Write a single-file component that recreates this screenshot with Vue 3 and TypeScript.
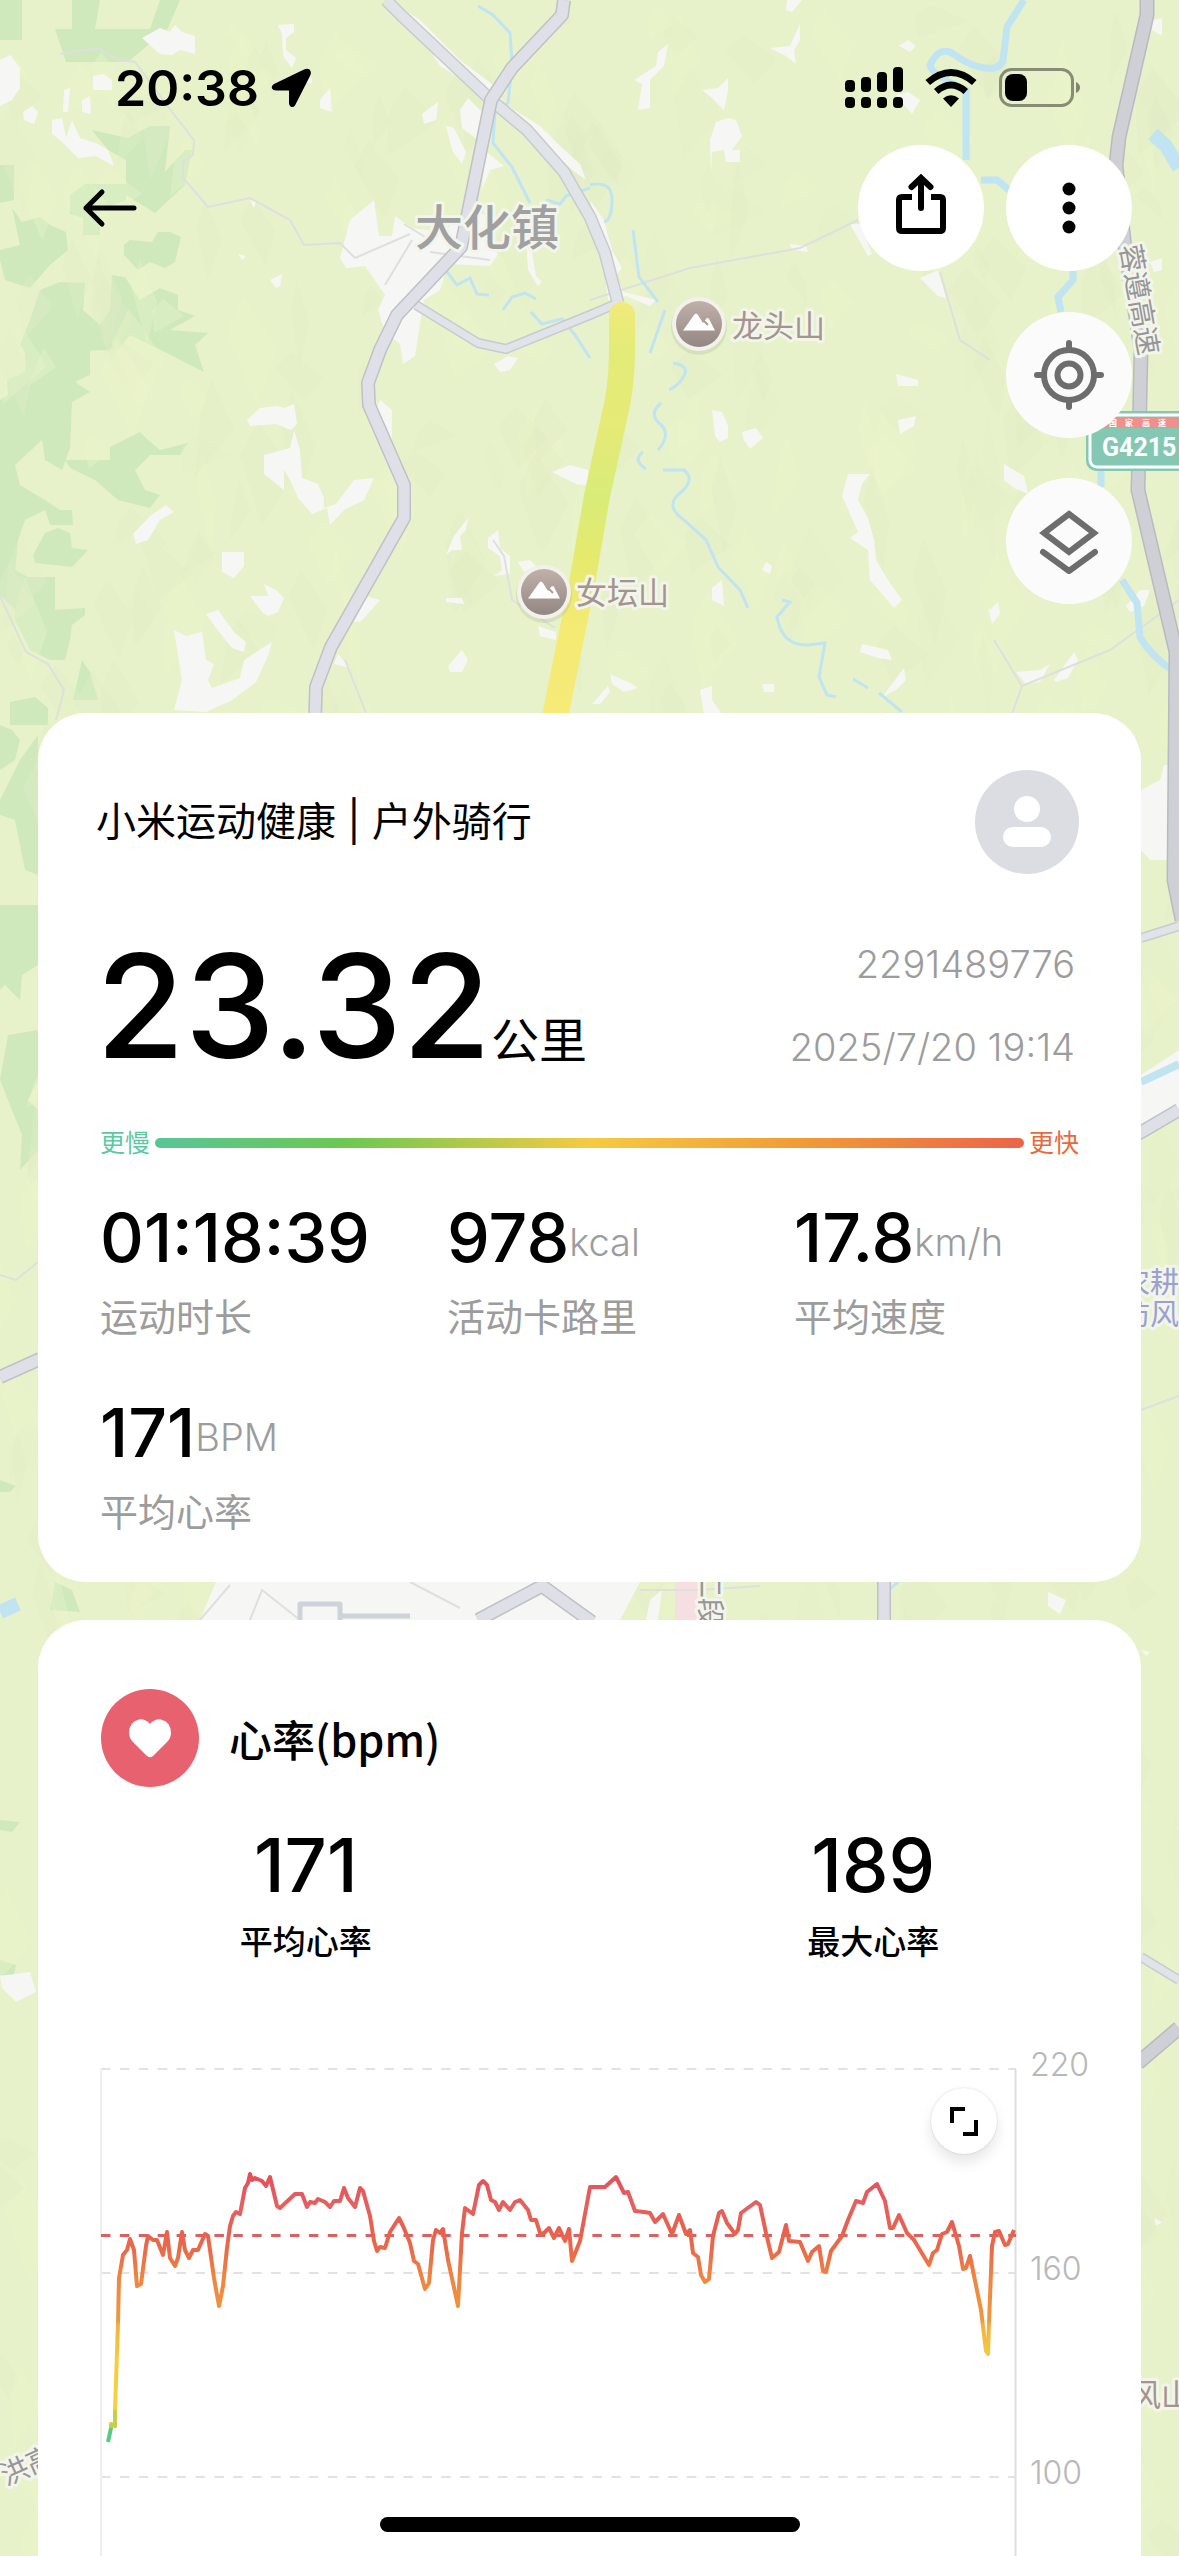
<script setup lang="ts">
interface Stat {
  value: string
  unit?: string
  label: string
}

const stats: Stat[] = [
  { value: '01:18:39', label: '运动时长' },
  { value: '978', unit: 'kcal', label: '活动卡路里' },
  { value: '17.8', unit: 'km/h', label: '平均速度' },
  { value: '171', unit: 'BPM', label: '平均心率' },
]

const heartStats: Stat[] = [
  { value: '171', label: '平均心率' },
  { value: '189', label: '最大心率' },
]

const axis = [220, 160, 100, 40]

// Heart rate samples: x runs along the workout, y is measured down from 220 bpm.
const heartLine =
  '7,373 10,359 10,355 14,357 14,341 17,254 18,209 22,186 26,181 29,170 33,181 36,217 40,215 45,177 47,167 52,171 56,171 62,186 66,163 69,189 74,197 77,189 81,163 84,181 88,189 92,181 97,181 104,165 107,167 113,209 118,237 122,217 126,179 129,157 132,147 135,143 139,145 144,119 147,114 149,105 151,111 154,109 161,112 165,117 169,108 176,137 179,139 194,125 201,125 206,138 209,133 214,134 217,130 224,133 229,138 233,132 239,132 243,119 247,129 254,138 259,119 262,122 269,147 273,172 276,182 279,178 284,179 289,163 298,149 302,157 309,174 313,192 317,195 324,220 328,214 332,171 335,161 339,164 342,160 347,191 357,237 361,164 364,139 372,145 378,116 382,112 386,116 390,131 394,133 398,141 402,133 409,141 414,133 419,131 427,141 430,151 435,151 439,164 442,165 448,159 453,169 458,159 464,172 468,160 471,192 479,172 489,118 504,118 515,108 523,124 527,123 534,142 543,143 549,144 554,153 562,145 571,165 578,146 585,165 589,161 592,184 597,188 600,206 604,213 608,210 612,167 618,144 621,142 626,154 634,165 637,161 640,144 655,133 659,136 665,164 671,189 678,183 685,156 688,172 699,173 707,192 711,183 718,177 722,202 725,203 730,182 741,167 747,151 755,132 762,134 766,123 776,115 784,132 789,159 792,159 798,146 806,164 813,171 828,196 832,184 836,181 841,165 846,163 851,153 858,177 862,200 865,199 869,187 880,241 885,282 887,285 888,254 891,177 894,163 898,162 904,176 907,175 913,161'

// Faceted hill shading, seeded so that the terrain is the same on every visit.
let seed = 7
const rand = (): number => {
  seed = (seed * 16807) % 2147483647
  return seed / 2147483647
}
const tints = ['#edf7cb', '#e1ecc4', '#e0eac3', '#ecf7cb', '#e3ebc6']
const facets = Array.from({ length: 900 }, () => {
  const x = Math.round(rand() * 1200)
  const y = Math.round(rand() * 2556)
  const w = 10 + Math.round(rand() * 26)
  const h = 30 + Math.round(rand() * 80)
  const lean = Math.round(rand() * 40 - 20)
  return {
    points: `${x},${y} ${x + w},${y + h / 2} ${x + lean},${y + h} ${x - w / 2},${y + h / 3}`,
    fill: tints[Math.floor(rand() * tints.length)],
  }
})

const forests = [
  '0,0 22,0 22,40 0,40',
  '72,0 100,0 95,29 72,29',
  '55,29 150,29 160,0 180,0 168,28 128,62 66,62',
  '92,130 128,138 150,126 170,126 165,172 185,150 192,150 185,185 155,213 126,195 126,160 108,150',
  '70,195 85,184 126,184 126,200 100,210 100,235 83,235 83,218 70,214',
  '0,165 14,165 14,200 0,203',
  '12,208 22,222 40,217 50,225 66,232 68,250 50,265 30,288 5,280 0,260 0,250 20,245',
  '124,245 130,240 152,242 158,232 170,232 181,237 175,262 165,268 150,262 138,270 124,255',
  '20,345 30,320 40,290 60,282 85,283 83,310 100,325 110,310 112,275 125,277 140,300 160,288 178,295 178,310 195,316 170,330 208,333 195,345 204,372 190,365 165,352 130,335 118,350 25,352',
  '25,350 90,350 90,375 75,382 90,392 72,402 70,448 62,470 45,460 42,440 15,465 20,485 45,500 60,510 72,510 73,525 50,525 45,510 25,520 18,540 15,570 28,577 55,577 55,610 15,610 0,595 0,400 8,395 7,380 25,372',
  '65,460 110,460 110,447 140,432 148,440 160,450 188,443 180,455 150,455 135,470 145,490 160,495 150,508 118,500 95,480 70,468',
  '33,555 45,533 58,528 70,533 72,548 88,550 72,567 35,563',
  '15,605 50,610 85,608 85,615 72,625 70,640 65,660 50,660 30,650 15,620',
  '73,700 82,660 90,672 98,700',
  '10,702 35,697 48,708 48,725 10,725',
  '0,725 12,730 20,740 15,760 0,770',
  '20,760 38,735 38,875 25,870 15,820 0,815 0,800',
  '0,905 38,905 38,965 22,975 20,1000 5,985 0,990',
  '8,1035 38,1030 38,1080 28,1100 38,1110 38,1150 20,1170 22,1135 0,1080',
  '55,1582 72,1590 80,1612 50,1610',
  '0,1480 16,1486 10,1492 0,1492',
  '0,1820 20,1822 12,1832 0,1830',
  '0,1960 16,1965 14,1975 0,1975',
]

const clearings = [
  '142,38 160,28 170,32 175,25 182,32 195,36 195,54 180,50 172,55 160,54',
  '278,25 294,24 294,32 286,38 286,50 296,58 292,68 283,56 282,34',
  '0,60 10,55 20,68 20,88 12,100 0,106',
  '93,76 104,74 112,80 112,90 93,90',
  '23,112 32,106 38,112 34,124 24,120',
  '64,90 70,88 68,112 63,112',
  '82,100 90,96 91,114 82,112',
  '52,120 62,118 66,138 72,120 80,138 98,144 108,150 114,166 96,156 78,158 62,142 52,134',
  '305,78 309,76 313,80 310,84',
  '320,100 330,88 332,112 320,108',
  '340,258 350,220 374,200 379,236 392,236 395,216 412,228 440,232 470,215 490,214 490,246 498,254 490,266 448,264 440,290 424,300 420,324 415,356 403,364 400,344 385,332 378,310 385,295 365,266 346,268',
  '405,10 420,20 440,40 460,60 492,84 505,104 540,126 560,146 580,164 586,180 575,172 550,150 500,112 470,84 440,66 430,50',
  '460,110 468,98 482,112 478,140 462,128',
  '446,126 454,128 466,152 462,164 452,150',
  '422,114 438,102 436,120 424,124',
  '484,150 504,166 490,170 482,190 484,160',
  '526,240 532,252 536,276 542,282 538,286 528,270',
  '270,280 282,274 280,286 276,288',
  '238,254 246,256 242,260',
  '250,200 256,202 254,208',
  '247,420 260,408 278,406 284,408 294,404 297,424 291,430 276,424 250,426',
  '264,455 290,448 294,430 300,450 302,478 318,484 324,498 324,508 336,504 354,480 374,478 364,500 344,510 330,525 327,508 312,514 298,498 290,480 284,470 284,490 264,474',
  '133,534 150,516 166,505 174,512 160,520 148,540 136,544',
  '222,552 244,552 244,566 234,578 222,572',
  '250,596 268,596 264,584 276,590 284,598 278,612 268,616 262,612',
  '206,614 218,610 234,632 246,642 244,652 232,648 216,628',
  '174,630 186,636 202,632 206,660 214,664 208,680 212,688 240,678 244,660 272,642 268,656 256,682 232,700 206,712 174,710 182,680',
  '380,400 392,410 392,440 376,410',
  '366,596 380,600 364,618 360,622 354,622',
  '338,654 350,668 334,664',
  '446,555 454,536 468,518 466,530 460,536 462,550 452,550',
  '488,538 498,530 500,548 510,556 510,574 494,576 502,570 500,556 488,548',
  '494,364 508,356 518,358 510,370 500,372',
  '552,472 570,465 588,470 590,486 576,484',
  '446,598 462,598 464,604 446,602',
  '448,666 462,650 468,660 462,672 450,672',
  '518,562 530,560 536,566 524,572',
  '538,626 556,632 556,640 540,636',
  '787,0 802,0 792,12 786,10',
  '658,52 668,44 664,66 650,80 650,108 638,110 642,84 634,80 656,66',
  '770,48 790,46 800,24 800,40 794,50 796,64 786,56',
  '702,90 718,88 728,78 728,90 724,110 712,98',
  '710,140 716,122 728,118 736,120 742,136 732,150 740,150 740,162 726,162 724,150 712,152 711,172',
  '899,46 908,40 916,46 910,52',
  '590,200 604,220 612,250 622,268 616,276 624,292 656,300 650,306 626,296 608,300 602,252',
  '790,244 806,246 808,252 792,250',
  '850,224 860,224 872,254 868,256',
  '920,278 938,270 946,298 938,296',
  '896,95 908,92 920,100 912,114',
  '1153,20 1162,18 1162,36 1152,30',
  '1150,262 1162,258 1162,270 1154,272',
  '896,374 918,380 918,386 898,386',
  '712,410 722,412 728,426 728,438 720,442 715,436',
  '742,432 756,428 763,438 750,449 744,440',
  '898,420 916,416 914,426 900,434',
  '848,474 870,474 862,484 858,500 868,518 874,540 876,560 888,580 902,600 894,608 870,580 868,550 850,538 858,532 842,496',
  '1004,464 1024,476 1028,494 1014,488 1004,480',
  '990,610 998,602 1000,614 992,624 988,606',
  '880,700 904,668 906,680 896,690 888,694',
  '862,644 888,650 892,660 878,658 860,652',
  '1016,672 1040,670 1050,664 1040,682 1026,684',
  '1054,680 1074,652 1078,660 1068,678 1056,682',
  '1126,606 1140,590 1150,590 1144,606 1130,612',
  '610,674 632,684 638,688 624,692 612,684',
  '592,704 608,686 610,692 600,704',
  '700,690 712,686 712,700 722,714 704,714',
  '762,684 774,684 774,692 764,692',
  '762,570 766,562 772,566 770,574',
  '712,588 722,580 724,606 712,600',
  '200,1620 216,1582 560,1582 600,1582 640,1582 620,1620',
  '650,1600 662,1590 658,1620 646,1620',
  '1048,1592 1066,1600 1060,1614 1048,1606',
  '1141,790 1160,780 1164,765 1179,765 1179,860 1150,860 1141,850',
  '1141,1075 1179,1050 1179,1110 1150,1130 1141,1140',
  '0,1976 30,1972 36,1992 16,2002 2,1988',
  '1141,1650 1150,1652 1146,1656',
  '1154,2218 1162,2222 1156,2226',
]

const streams = [
  'M478 6 493 15 510 33 512 63 508 103 495 110 493 143 512 167 530 203',
  'M546 200 560 204 566 196 590 188',
  'M447 272 457 285 470 278 477 294 489 295',
  'M503 310 512 297 525 293 536 299',
  'M531 312 542 324 562 319 575 335 590 358',
  'M590 185Q612 180 612 200T604 222',
  'M633 230 639 277 658 302M665 310 658 330 650 353',
  'M673 363Q690 366 684 376T669 390M661 403Q648 414 660 424T658 450M643 452Q632 460 646 469',
  'M663 470 684 470Q696 480 680 493T684 520L706 540 718 567 740 590 748 608',
  'M782 600 790 602 777 617Q782 646 808 645L825 643 819 677 827 695 836 697',
  'M853 679 868 688M879 693 902 712',
]

const lanes = [
  'M60 54 98 48 118 60 135 62 172 112 194 140 193 155 183 162 183 178 208 207 250 198 290 220 304 245 340 243 355 258',
  'M355 258 410 234M385 285 412 240M430 252 490 260M404 224 430 240',
  'M590 300 690 268 800 248 858 220',
  'M940 272 960 340 990 360',
  'M1179 600 1110 650 1022 686M1022 686 994 640M1022 686 1010 720',
  'M0 596 26 652 48 664 64 690 56 720',
  'M493 540 504 556 512 600 555 628M345 660 366 713',
  'M1141 1410 1179 1396M0 1275 16 1280 38 1262',
  'M200 1620 230 1585M250 1620 262 1590 300 1620M410 1582 460 1608M640 1590 700 1590 760 1586',
]
</script>

<template>
  <main class="screen">
    <svg class="map" viewBox="0 0 1179 2556" preserveAspectRatio="xMidYMin slice" aria-hidden="true">
      <defs>
        <linearGradient id="track" gradientUnits="userSpaceOnUse" x1="0" y1="300" x2="0" y2="713">
          <stop offset="0" stop-color="#f1ea7a" />
          <stop offset="0.12" stop-color="#e3ec78" />
          <stop offset="0.3" stop-color="#e6ea76" />
          <stop offset="0.48" stop-color="#d9ec78" />
          <stop offset="0.62" stop-color="#e5ea6e" />
          <stop offset="0.8" stop-color="#f5ea74" />
          <stop offset="1" stop-color="#f7ea78" />
        </linearGradient>
        <linearGradient id="peak" x1="0" y1="0" x2="0" y2="1">
          <stop offset="0" stop-color="#c0b0aa" />
          <stop offset="1" stop-color="#938783" />
        </linearGradient>
      </defs>
      <rect width="1179" height="2556" fill="#e7f2ca" />
      <polygon v-for="(f, i) in forests" :key="'f' + i" :points="f" fill="#cfe9bd" />
      <polygon v-for="(f, i) in facets" :key="'t' + i" :points="f.points" :fill="f.fill" opacity="0.32" />
      <polygon v-for="(c, i) in clearings" :key="'c' + i" :points="c" fill="#f6f7f4" />
      <rect x="675" y="1582" width="24" height="38" fill="#f6dfe0" />
      <g fill="none" stroke="#dde0de" stroke-width="2">
        <path v-for="(l, i) in lanes" :key="'l' + i" :d="l" />
      </g>
      <g fill="none" stroke="#c0e4f1" stroke-width="3">
        <path v-for="(s, i) in streams" :key="'s' + i" :d="s" />
        <g stroke-width="7">
          <path d="M1024 0 1007 27 1003 60Q1000 70 985 68T955 55 930 65Q930 74 966 90V160M981 180 997 180 1009 190" />
          <path d="M1073 271V280L1058 297 1061 312M1101 470V487M1122 580 1137 603 1140 637Q1150 655 1172 670" />
        </g>
        <path d="M1153 134 1166 146 1179 168" stroke-width="14" />
        <path d="M0 1612 18 1604" stroke-width="14" />
        <path d="M898 1582 882 1596 880 1620" />
        <path d="M1141 1082 1179 1064" stroke-width="8" />
      </g>
      <g fill="none" stroke-linejoin="round">
        <g stroke="#c8cad0" stroke-width="13">
          <path d="M386 0 402 16 491 100 527 130 564 172 590 217 605 253 618 303" />
          <path d="M416 305 478 343 506 349 590 315 618 303" stroke-width="10" />
          <path d="M1141 938 1179 926M1141 1957 1179 1980" stroke-width="10" />
        </g>
        <g stroke="#e0e4e9" stroke-width="10">
          <path d="M386 0 402 16 491 100 527 130 564 172 590 217 605 253 618 303" />
          <path d="M416 305 478 343 506 349 590 315 618 303" stroke-width="7" />
          <path d="M1141 938 1179 926M1141 1957 1179 1980" stroke-width="7" />
        </g>
        <g stroke="#bfc0c8" stroke-width="14">
          <path d="M564 0 562 15 512 68 491 100 461 247 397 315 380 350 368 383 369 405 404 485 404 518 331 647 316 687 315 720" />
          <path d="M0 1377 40 1359M478 1620 542 1586 592 1622M1138 1134 1179 1110M884 1580V1620" />
        </g>
        <g stroke="#dfe0e7" stroke-width="11">
          <path d="M564 0 562 15 512 68 491 100 461 247 397 315 380 350 368 383 369 405 404 485 404 518 331 647 316 687 315 720" />
          <path d="M0 1377 40 1359M478 1620 542 1586 592 1622M1138 1134 1179 1110M884 1580V1620" />
        </g>
        <path d="M300 1620V1604H340V1620M340 1604V1616H410" stroke="#cdd3d8" stroke-width="5" />
        <g stroke="#b9bac0" stroke-width="15">
          <path d="M1147 0V15L1119 137 1116 165 1124 240 1141 350 1138 490 1176 652 1174 880 1182 920" />
          <path d="M1138 2063 1179 2028" />
        </g>
        <g stroke="#cfd0d6" stroke-width="12">
          <path d="M1147 0V15L1119 137 1116 165 1124 240 1141 350 1138 490 1176 652 1174 880 1182 920" />
          <path d="M1138 2063 1179 2028" />
        </g>
        <path
          d="M622 315V350Q622 375 618 400L597 496 582 583 554 722"
          stroke="url(#track)"
          stroke-width="26"
          stroke-linecap="round"
        />
      </g>
      <g v-for="p in [{ x: 699, y: 324 }, { x: 544, y: 592 }]" :key="p.x" :transform="`translate(${p.x} ${p.y})`">
        <circle cy="3" r="28" fill="#8c9478" opacity="0.18" />
        <circle r="27" fill="#f2f1ec" />
        <circle r="23" fill="url(#peak)" />
        <path d="M-16 6.500-5-9Q-3-12-1-9L4-1 7-5Q9-7 10-5L16 6.500Z" fill="#fff" />
        <path d="M5-3 9 1" stroke="#a89b96" stroke-width="2" />
      </g>
      <g class="place">
        <text x="415" y="245" class="town">大化镇</text>
        <text x="732" y="337">龙头山</text>
        <text x="576" y="604">女坛山</text>
        <text x="1130" y="2406">风山</text>
        <text x="1121" y="1293" class="site">农耕</text>
        <text x="1121" y="1325" class="site">防风</text>
        <text class="road" transform="translate(1120 246) rotate(80)">蓉遵高速</text>
        <text class="road" transform="translate(700 1570) rotate(90)">二段</text>
        <text class="road" transform="translate(6 2486) rotate(-24)">洪高</text>
      </g>
      <g>
        <rect x="1086" y="411" width="112" height="60" rx="10" fill="#84c8b4" />
        <rect x="1090" y="415" width="104" height="52" rx="7" fill="none" stroke="#fff" stroke-width="3" />
        <path d="M1092 428V423Q1092 417 1098 417H1190V428Z" fill="#f08f8c" />
        <text x="1109" y="426" class="shield-top">国</text>
        <text x="1125" y="426" class="shield-top">家</text>
        <text x="1142" y="426" class="shield-top">高</text>
        <text x="1158" y="426" class="shield-top">速</text>
        <text x="1102" y="456" class="shield">G4215</text>
      </g>
    </svg>

    <div class="content">
      <header class="status">
        <span class="clock">20:38</span>
        <svg width="40" height="40" viewBox="0 0 40 40" aria-hidden="true">
          <path d="M38.500 1.500Q41 4 39 8L24 37.500Q22 40 19.500 38.500 18 37 18 35V22.500H5Q2 22.500 1 20.500 0 18 3 16L33 1.500Q36.500 0 38.500 1.500Z" />
        </svg>
        <div class="status-icons">
          <svg width="58" height="42" viewBox="0 0 58 42" aria-hidden="true">
            <rect x="0" y="13" width="10" height="12" rx="4" /><rect x="16" y="10" width="10" height="15" rx="4" />
            <rect x="32" y="5" width="10" height="20" rx="4" /><rect x="48" y="0" width="10" height="25" rx="4" />
            <rect x="0" y="30" width="10" height="11" rx="4" /><rect x="16" y="30" width="10" height="11" rx="4" />
            <rect x="32" y="30" width="10" height="11" rx="4" /><rect x="48" y="30" width="10" height="11" rx="4" />
          </svg>
          <svg width="52" height="38" viewBox="0 0 52 38" aria-hidden="true">
            <path d="M0.500 11Q26-11 51.500 11L47 16Q26-2 5 16Z" />
            <path d="M9 20Q26 5 43 20L38.500 25Q26 14 13.500 25Z" />
            <path d="M18 29.500Q26 23 34 29.500L26 38Z" />
          </svg>
          <svg width="82" height="40" viewBox="0 0 82 40" aria-hidden="true">
            <rect x="1.500" y="1.500" width="72" height="36" rx="11" fill="none" stroke="#000" stroke-opacity="0.42" stroke-width="3" />
            <rect x="6" y="6" width="22" height="27" rx="8" />
            <path d="M77 14Q81 16 81 19.500T77 25Z" opacity="0.45" />
          </svg>
        </div>
      </header>

      <nav class="toolbar">
        <button class="back" type="button" aria-label="返回">
          <svg width="56" height="40" viewBox="0 0 56 40">
            <path d="M20 4 4 20 20 36M4 20H52" fill="none" stroke="#000" stroke-width="5" stroke-linecap="round" stroke-linejoin="round" />
          </svg>
        </button>
        <div class="actions">
          <button class="round" type="button" aria-label="分享">
            <svg width="126" height="126" viewBox="0 0 126 126" fill="none" stroke="#000" stroke-width="6">
              <path d="M54 52H44Q41 52 41 55V83Q41 86 44 86H82Q85 86 85 83V55Q85 52 82 52H73" />
              <path d="M63 63V34M53.500 42 63 33 72.500 42" stroke-linecap="round" stroke-linejoin="miter" />
            </svg>
          </button>
          <button class="round" type="button" aria-label="更多">
            <svg width="126" height="126" viewBox="0 0 126 126">
              <circle cx="63" cy="44" r="6.500" /><circle cx="63" cy="63" r="6.500" /><circle cx="63" cy="82" r="6.500" />
            </svg>
          </button>
        </div>
      </nav>
      <div class="side">
        <button class="round soft" type="button" aria-label="定位">
          <svg width="126" height="126" viewBox="0 0 126 126" fill="none" stroke="#6d6d6d" stroke-width="6">
            <circle cx="63" cy="63" r="25" /><circle cx="63" cy="63" r="11.500" />
            <path d="M63 36V31M63 90V95M36 63H31M90 63H95" stroke-linecap="round" />
          </svg>
        </button>
        <button class="round soft" type="button" aria-label="图层">
          <svg width="126" height="126" viewBox="0 0 126 126" fill="none" stroke="#6d6d6d" stroke-width="6">
            <path d="M63 36 88 55 63 74 38 55Z" />
            <path d="M37 74 63 93 89 74" stroke-linecap="round" stroke-linejoin="round" />
          </svg>
        </button>
      </div>

      <section class="card summary">
        <div class="head">
          <h1>小米运动健康 | 户外骑行</h1>
          <svg width="104" height="104" viewBox="0 0 104 104" role="img" aria-label="头像">
            <circle cx="52" cy="52" r="52" fill="#dcdde2" />
            <circle cx="52" cy="39" r="13" fill="#fff" />
            <rect x="28" y="57" width="48" height="20" rx="10" fill="#fff" />
          </svg>
        </div>
        <div class="total">
          <p class="distance">23.32<small>公里</small></p>
          <div class="meta">
            <span>2291489776</span>
            <time datetime="2025-07-20T19:14">2025/7/20 19:14</time>
          </div>
        </div>
        <div class="pace">
          <span class="slow">更慢</span>
          <i class="scale"></i>
          <span class="fast">更快</span>
        </div>
        <dl class="stats">
          <div v-for="s in stats" :key="s.label" class="stat">
            <dd>{{ s.value }}<span v-if="s.unit">{{ s.unit }}</span></dd>
            <dt>{{ s.label }}</dt>
          </div>
        </dl>
      </section>

      <section class="card heart">
        <div class="heart-head">
          <svg width="98" height="98" viewBox="0 0 98 98" aria-hidden="true">
            <circle cx="49" cy="49" r="49" fill="#e8616f" />
            <path d="M49 35Q44 29.500 38 30.500 28 33 28 44 28 49 32 53L46 67Q49 69.500 52 67L66 53Q70 49 70 44 70 33 60 30.500 54 29.500 49 35Z" fill="#fff" />
          </svg>
          <h2>心率(bpm)</h2>
        </div>
        <dl class="heart-stats">
          <div v-for="s in heartStats" :key="s.label">
            <dd>{{ s.value }}</dd>
            <dt>{{ s.label }}</dt>
          </div>
        </dl>
        <div class="chart">
          <div class="plot">
            <svg viewBox="0 0 915 816" preserveAspectRatio="none" role="img" aria-label="心率曲线">
              <defs>
                <linearGradient id="zones" gradientUnits="userSpaceOnUse" x1="0" y1="0" x2="0" y2="400">
                  <stop offset="0.26" stop-color="#e34f59" />
                  <stop offset="0.34" stop-color="#e5605f" />
                  <stop offset="0.4" stop-color="#e7604f" />
                  <stop offset="0.46" stop-color="#ea6c49" />
                  <stop offset="0.52" stop-color="#ee8540" />
                  <stop offset="0.63" stop-color="#ee993f" />
                  <stop offset="0.64" stop-color="#f0b144" />
                  <stop offset="0.72" stop-color="#f6cb40" />
                  <stop offset="0.85" stop-color="#f6d23f" />
                  <stop offset="0.855" stop-color="#c6cf46" />
                  <stop offset="0.895" stop-color="#c6cf46" />
                  <stop offset="0.9" stop-color="#55cb86" />
                </linearGradient>
              </defs>
              <path d="M0 0H915M0 204H915M0 408H915M0 612H915" stroke="#e2e2e2" stroke-width="2" stroke-dasharray="9.500 9.400" />
              <path d="M0 0V816" stroke="#efefef" stroke-width="2" />
              <path d="M914.500 0V816" stroke="#dedede" stroke-width="2" />
              <path d="M0 166.500H915" stroke="#d86260" stroke-width="3" stroke-dasharray="9.500 9.400" />
              <polyline :points="heartLine" fill="none" stroke="url(#zones)" stroke-width="4" stroke-linejoin="round" />
            </svg>
            <button class="expand" type="button" aria-label="全屏">
              <svg width="30" height="30" viewBox="0 0 30 30" fill="none" stroke="#000" stroke-width="4">
                <path d="M3 17V3H16M14 28H27V14" />
              </svg>
            </button>
          </div>
          <ul class="axis">
            <li v-for="a in axis" :key="a">{{ a }}</li>
          </ul>
        </div>
      </section>
    </div>
    <div class="home"></div>
  </main>
</template>

<style>
body {
  margin: 0;
}
</style>

<style scoped>
.screen {
  position: relative;
  height: 100vh;
  overflow: hidden;
  background: #e7f2ca;
  color: #000;
  font-family: Inter, 'Noto Sans CJK SC', sans-serif;
}
.map {
  position: absolute;
  inset: 0;
  width: 100%;
  height: 100%;
}
.place text {
  font-size: 31px;
  fill: #a2948f;
  stroke: #f3f5ea;
  stroke-width: 6px;
  stroke-linejoin: round;
  paint-order: stroke;
}
.place .town {
  font-size: 48px;
  font-weight: 500;
  fill: #a0a0a2;
}
.place .site {
  font-size: 29px;
  fill: #98a1d2;
}
.place .road {
  font-size: 28px;
  fill: #96969a;
}
.shield {
  font-family: Roboto, 'Liberation Sans', sans-serif;
  font-size: 25px;
  font-weight: 700;
  fill: #fff;
}
.shield-top {
  font-size: 8px;
  font-weight: 700;
  fill: #fff;
}
.content {
  position: relative;
  height: 100%;
  overflow-y: auto;
  scrollbar-width: none;
}
.status {
  display: flex;
  align-items: center;
  gap: 12px;
  box-sizing: border-box;
  height: 145px;
  padding: 32px 98px 2px 115px;
}
.clock {
  font-size: 50px;
  font-weight: 600;
  line-height: 60px;
}
.status-icons {
  display: flex;
  align-items: center;
  gap: 22px;
  margin-left: auto;
}
.toolbar {
  display: flex;
  align-items: center;
  justify-content: space-between;
  padding: 0 47px 0 82px;
}
button {
  padding: 0;
  border: 0;
  background: none;
}
svg {
  display: block;
}
.actions {
  display: flex;
  gap: 22px;
}
.round {
  width: 126px;
  height: 126px;
  border-radius: 50%;
  background: #fff;
}
.soft {
  background: #fbfbfb;
}
.side {
  display: flex;
  flex-direction: column;
  align-items: flex-end;
  gap: 40px;
  padding: 41px 47px 109px;
}
.card {
  margin: 0 38px 38px;
  border-radius: 48px;
  background: #fff;
}
h1,
h2,
p,
dl,
dd,
dt,
ul {
  margin: 0;
  padding: 0;
  font-weight: 400;
}
.summary {
  padding: 57px 0 42px 58px;
}
.head {
  display: flex;
  align-items: center;
  justify-content: space-between;
  padding-right: 62px;
}
h1 {
  font-size: 40px;
  line-height: 56px;
}
.total {
  display: flex;
  align-items: center;
  justify-content: space-between;
  height: 166px;
  margin-top: 49px;
  padding-right: 66px;
}
.distance {
  font-size: 144px;
  font-weight: 500;
  line-height: 166px;
}
.distance small {
  font-size: 48px;
  font-weight: 400;
  line-height: 48px;
}
.meta {
  display: flex;
  flex-direction: column;
  align-items: flex-end;
  color: #9c9c9c;
  font-size: 38px;
  font-weight: 300;
  line-height: 83px;
}
.pace {
  display: flex;
  align-items: center;
  gap: 5px;
  margin-top: 38px;
  padding: 0 62px 0 4px;
  font-size: 25px;
  line-height: 32px;
}
.slow {
  color: #5cc9a0;
}
.fast {
  color: #e9693c;
}
.scale {
  flex: 1;
  height: 10px;
  border-radius: 5px;
  background: linear-gradient(90deg, #58c598, #6cc852 22%, #f6ca42 50%, #f09a37 75%, #eb6449);
}
.stats {
  display: grid;
  grid-template-columns: repeat(3, 1fr);
  gap: 47px 0;
  margin-top: 38px;
  padding-left: 4px;
}
.stat {
  display: flex;
  flex-direction: column;
  gap: 12px;
}
.stat dd {
  display: flex;
  align-items: flex-end;
  font-size: 68px;
  font-weight: 500;
  line-height: 80px;
}
.stat dd span {
  color: #9c9c9c;
  font-size: 38px;
  font-weight: 300;
  line-height: 70px;
}
.stat dt {
  color: #9c9c9c;
  font-size: 38px;
  line-height: 56px;
}
.heart {
  padding-top: 69px;
}
.heart-head {
  display: flex;
  align-items: center;
  gap: 30px;
  padding-left: 63px;
}
h2 {
  font-family: 'Noto Sans CJK SC', sans-serif;
  font-size: 43px;
  font-weight: 500;
  line-height: 60px;
}
.heart-stats {
  display: grid;
  grid-template-columns: 1fr 1fr;
  gap: 32px;
  margin-top: 36px;
  text-align: center;
}
.heart-stats div {
  display: flex;
  flex-direction: column;
  gap: 11px;
}
.heart-stats dd {
  font-size: 74px;
  font-weight: 500;
  line-height: 84px;
}
.heart-stats dt {
  font-size: 33px;
  font-weight: 500;
  line-height: 48px;
}
.chart {
  display: flex;
  margin-top: 103px;
  padding-left: 63px;
}
.plot {
  position: relative;
  flex: 1;
}
.plot > svg {
  width: 100%;
  height: 816px;
  overflow: visible;
}
.expand {
  position: absolute;
  top: 19px;
  right: 19px;
  display: flex;
  align-items: center;
  justify-content: center;
  width: 66px;
  height: 66px;
  border-radius: 50%;
  background: #fff;
  box-shadow: 0 0 2px rgba(0, 0, 0, 0.16), 0 8px 14px rgba(0, 0, 0, 0.1);
}
.axis {
  width: 111px;
  margin-top: -20px;
  padding-left: 14px;
  list-style: none;
  color: #b8b8b8;
  font-size: 32px;
  font-weight: 300;
}
.axis li {
  height: 204px;
  line-height: 32px;
}
.home {
  position: absolute;
  bottom: 24px;
  left: 50%;
  width: 420px;
  height: 15px;
  margin-left: -210px;
  border-radius: 8px;
  background: #000;
}
</style>
